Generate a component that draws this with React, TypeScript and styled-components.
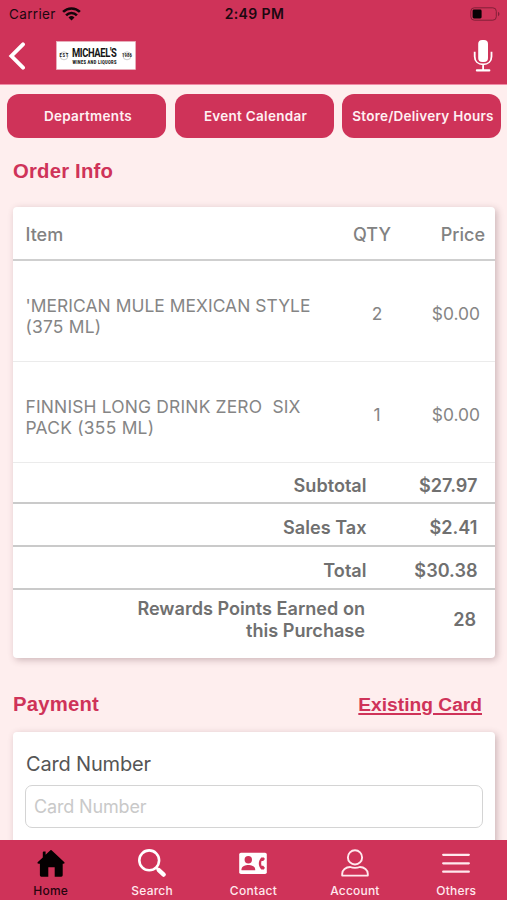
import React from "react";
import styled, { createGlobalStyle } from "styled-components";

const PINK = "#cf3359";

const GlobalStyle = createGlobalStyle`
  * { box-sizing: border-box; }
  body { margin: 0; background: #feeeee; font-family: Inter, "Liberation Sans", sans-serif; }
`;

const Screen = styled.div`
  display: flex;
  flex-direction: column;
  width: 507px;
  height: 900px;
  overflow: hidden;
  background: #feeeee;
`;

const Header = styled.header`
  flex: none;
  height: 85px;
  background: ${PINK};
  border-bottom: 1px solid #f08ba6;
`;

const StatusBar = styled.div`
  display: grid;
  grid-template-columns: 1fr auto 1fr;
  align-items: center;
  height: 27px;
  padding: 0 7px 0 9px;
  color: #1c0810;
  font-size: 13.5px;
`;

const Carrier = styled.div`
  display: flex;
  align-items: center;
  gap: 6px;
  letter-spacing: 0.35px;
`;

const Clock = styled.div`
  font-size: 14px;
  font-weight: 600;
  letter-spacing: 0.4px;
`;

const BatterySlot = styled.div`
  display: flex;
  justify-content: flex-end;
`;

const NavBar = styled.div`
  display: flex;
  align-items: center;
  height: 57px;
  padding: 0 14px 0 8px;
`;

const Logo = styled.svg`
  margin-left: 29.5px;
  margin-right: auto;
`;

const Content = styled.main`
  flex: 1;
  min-height: 0;
  overflow: hidden;
  padding: 9px 12px 0 13px;
`;

const QuickLinks = styled.nav`
  display: grid;
  grid-template-columns: repeat(3, 1fr);
  gap: 8.5px;
  margin: 0 -6px;
`;

const QuickLink = styled.button<{ $spacing: number }>`
  height: 44px;
  padding: 0 0 0 3px;
  border: 0;
  border-radius: 12px;
  background: ${PINK};
  color: #fff0f3;
  font: 600 13.5px Inter, sans-serif;
  letter-spacing: ${(p) => p.$spacing}px;
  white-space: nowrap;
`;

const SectionHead = styled.div`
  display: flex;
  justify-content: space-between;
  align-items: center;
  height: 69px;
  padding: 0 13px 2px 0;
`;

const PaymentHead = styled(SectionHead)`
  height: 74px;
  padding: 18px 13px 0 0;
`;

const Title = styled.h2`
  margin: 0;
  color: ${PINK};
  font: 700 20.3px "Liberation Sans", sans-serif;
  letter-spacing: 0.2px;
`;

const CardLink = styled.a`
  padding-top: 1px;
  color: ${PINK};
  font: 700 19.2px "Liberation Sans", sans-serif;
  text-decoration: underline;
  text-decoration-thickness: 1.5px;
  text-underline-offset: 2px;
`;

const Card = styled.section`
  border-radius: 4px;
  background: #fff;
  box-shadow: 2px 2px 7px rgba(90, 50, 60, 0.3);
`;

const HeadRow = styled.div`
  display: grid;
  grid-template-columns: 1fr 76px 75px;
  align-items: center;
  height: 54px;
  padding: 3px 10px 0 12.5px;
  border-bottom: 2px solid #cfcfcf;
  color: #828282;
  font-size: 18px;
  font-weight: 500;
`;

const ItemRow = styled.div`
  display: grid;
  grid-template-columns: 1fr 46px 80px;
  align-items: center;
  height: 101px;
  padding: 5px 15px 0 12.5px;
  border-bottom: 1px solid #ebebeb;
  color: #858585;
  font-size: 17.4px;
  line-height: 21.5px;
`;

const ItemName = styled.div`
  padding-top: 5px;
`;

const NameLine = styled.span<{ $spacing: number }>`
  display: block;
  white-space: pre;
  letter-spacing: ${(p) => p.$spacing}px;
`;

const Cell = styled.div`
  text-align: right;
`;

const QtyCell = styled.div`
  text-align: center;
`;

const SumRow = styled.div`
  display: grid;
  grid-template-columns: 1fr 111px;
  align-items: center;
  height: 43px;
  padding: 5px 17.5px 0 13px;
  border-bottom: 2px solid #cacaca;
  color: #707070;
  font-size: 18.1px;
  font-weight: 600;
`;

const SubtotalRow = styled(SumRow)`
  height: 41px;
  padding-top: 4px;
`;

const RewardRow = styled(SumRow)`
  height: 68px;
  padding: 0 19px 9px 13px;
  border-bottom: 0;
  line-height: 21.5px;
`;

const PaymentCard = styled(Card)`
  height: 130px;
  padding: 20px 12px 0;
`;

const FieldLabel = styled.label`
  display: block;
  height: 33px;
  padding-left: 1px;
  color: #555;
  font-size: 20px;
  line-height: 24px;
  letter-spacing: -0.18px;
`;

const Field = styled.input`
  display: block;
  width: 458px;
  height: 43px;
  padding: 0 8px;
  border: 1.5px solid #d4d4d4;
  border-radius: 7px;
  outline: 0;
  background: #fff;
  font: 400 18px Inter, sans-serif;
  letter-spacing: -0.15px;
  &::placeholder { color: #c9c9c9; opacity: 1; }
`;

const TabBar = styled.nav`
  flex: none;
  display: grid;
  grid-template-columns: repeat(5, 1fr);
  height: 60px;
  background: ${PINK};
`;

const Tab = styled.a<{ $active?: boolean; $spacing?: number }>`
  display: flex;
  flex-direction: column;
  align-items: center;
  padding-top: 8px;
  color: ${(p) => (p.$active ? "#26040e" : "#ffe9ee")};
  font-size: 12px;
  font-weight: 500;
  line-height: 16px;
  letter-spacing: ${(p) => p.$spacing ?? 0.2}px;
  svg { height: 30px; margin-bottom: 5px; }
`;

const WifiIcon = () => (
  <svg width="19" height="14" viewBox="0 0 19 14" fill="none" stroke="#13050a" strokeWidth="2.6">
    <path d="M1.1 4.9a12 12 0 0 1 16.8 0" />
    <path d="M4.1 8.3a7.6 7.6 0 0 1 10.8 0" />
    <path d="M6.5 10.5a4.3 4.3 0 0 1 6 0l-3 3z" fill="#13050a" stroke="none" />
  </svg>
);

const BatteryIcon = () => (
  <svg width="30" height="14" viewBox="0 0 30 14">
    <rect x="0.8" y="0.8" width="25.5" height="12.4" rx="3.5" fill="none" stroke="#822038" />
    <rect x="2.6" y="2.6" width="9" height="8.8" rx="1.4" fill="#080204" />
    <path d="M28 4.8v4.4c2-1 2-3.4 0-4.4z" fill="#822038" />
  </svg>
);

const BackIcon = () => (
  <svg width="18" height="28" viewBox="0 0 18 28" fill="none" stroke="#fff" strokeWidth="3.9" strokeLinecap="round">
    <path d="M15 2.3L3.4 14l11.6 11.7" strokeLinejoin="miter" />
  </svg>
);

const MicIcon = () => (
  <svg width="20" height="32" viewBox="0 0 20 32" fill="none" stroke="#fff">
    <rect x="5.2" y="0" width="9.8" height="22" rx="4" fill="#fff" stroke="none" />
    <path d="M1.7 11.8v4.6c0 4.8 3.4 8 8.4 8s8.4-3.2 8.4-8v-4.6M10.1 24.4v5.8" strokeWidth="1.8" />
    <path d="M3.9 30.4h12.4" strokeWidth="2.2" strokeLinecap="round" />
  </svg>
);

const StoreLogo = () => (
  <Logo width="80" height="29" viewBox="0 0 80 29">
    <rect x="0.5" y="0.5" width="79" height="28" fill="#fff" stroke="#e9b5c1" strokeWidth="0.7" />
    <g fill="none" stroke="#aaa" strokeWidth="0.6">
      <circle cx="8" cy="14.8" r="4" />
      <circle cx="71" cy="14.8" r="4" />
    </g>
    <g fill="#151515" fontFamily="Roboto, sans-serif" fontWeight="700">
      <text transform="translate(16 16.3) scale(0.76 1)" fontSize="12.4" textLength="59">MICHAEL'S</text>
      <text transform="translate(16.5 22.6) scale(0.8 1)" fontSize="5" fontWeight="900" textLength="55">WINES AND LIQUORS</text>
      <text transform="translate(3.6 16.4) scale(0.9 1)" fontSize="4.6" textLength="9.8">EST</text>
      <text transform="translate(66 16.4) scale(0.9 1)" fontSize="4.6" textLength="11">1986</text>
    </g>
  </Logo>
);

const HomeIcon = () => (
  <svg width="30" height="30" viewBox="0 0 30 30" fill="#050001">
    <path d="M14.4 2.2Q15 1.6 15.6 2.2L28.4 14.2Q29.3 15.6 27.4 15.7H26.7V27.3Q26.7 28.7 25.3 28.7H18.7V19.2H12.3V28.7H5.3Q3.9 28.7 3.9 27.3V15.7H2.7Q.7 15.6 1.6 14.2L6.8 9.4V4.4Q6.8 3.5 7.7 3.5H9.6V6.7z" />
  </svg>
);

const SearchIcon = () => (
  <svg width="30" height="30" viewBox="0 0 30 30" fill="none" stroke="#fff">
    <circle cx="12.2" cy="12.3" r="9.9" strokeWidth="2.6" />
    <path d="M19.2 19.5l2.6 2.6" strokeWidth="2.6" />
    <path d="M21.8 22.1l4.9 4.5" strokeWidth="4.3" strokeLinecap="round" />
  </svg>
);

const ContactIcon = () => (
  <svg width="30" height="30" viewBox="0 0 30 30">
    <rect x="1.2" y="4.7" width="27.6" height="21.3" rx="1.8" fill="#fff" />
    <circle cx="10.3" cy="11.8" r="3.7" fill={PINK} />
    <path d="M3.5 22.3v-1.1c0-2.7 4.3-4.1 6.8-4.1s6.9 1.4 6.9 4.1v1.1z" fill={PINK} />
    <path d="M25.9 9.4h-2.6c-1.7 1.9-2.5 3.8-2.5 6s.8 4.1 2.5 6h2.6l1-1.6-1.7-2.1h-1.7c-.5-1.5-.5-3.1 0-4.6h1.7l1.7-2.1z" fill={PINK} />
  </svg>
);

const AccountIcon = () => (
  <svg width="30" height="30" viewBox="0 0 30 30" fill="none" stroke="#ffe9ee" strokeWidth="1.9" strokeLinejoin="round">
    <circle cx="15" cy="9.4" r="7.1" />
    <path d="M2.2 27.6v-1.8c0-3.8 3.6-6.8 8-6.8 1.8.8 3 .9 4.8.9s3-.1 4.8-.9c4.4 0 8 3 8 6.8v1.8z" />
  </svg>
);

const MenuIcon = () => (
  <svg width="30" height="30" viewBox="0 0 30 30" stroke="#ffe9ee" strokeWidth="2.3" strokeLinecap="round">
    <path d="M2.2 6.8h25.6M2.2 15.3h25.6M2.2 23.7h25.6" />
  </svg>
);

type Item = { lines: [string, number][]; qty: number; price: string };

const items: Item[] = [
  { lines: [["'MERICAN MULE MEXICAN STYLE", 0.06], ["(375 ML)", 0.2]], qty: 2, price: "$0.00" },
  { lines: [["FINNISH LONG DRINK ZERO  SIX", 0.19], ["PACK (355 ML)", 0.25]], qty: 1, price: "$0.00" },
];

export default function App() {
  return (
    <Screen>
      <GlobalStyle />
      <Header>
        <StatusBar>
          <Carrier>Carrier <WifiIcon /></Carrier>
          <Clock>2:49 PM</Clock>
          <BatterySlot><BatteryIcon /></BatterySlot>
        </StatusBar>
        <NavBar>
          <BackIcon />
          <StoreLogo />
          <MicIcon />
        </NavBar>
      </Header>
      <Content>
        <QuickLinks>
          <QuickLink $spacing={0.3}>Departments</QuickLink>
          <QuickLink $spacing={0.28}>Event Calendar</QuickLink>
          <QuickLink $spacing={0.25}>Store/Delivery Hours</QuickLink>
        </QuickLinks>
        <SectionHead><Title>Order Info</Title></SectionHead>
        <Card>
          <HeadRow>
            <span>Item</span>
            <QtyCell>QTY</QtyCell>
            <Cell>Price</Cell>
          </HeadRow>
          {items.map((item) => (
            <ItemRow key={item.lines[0][0]}>
              <ItemName>
                {item.lines.map(([text, spacing]) => (
                  <NameLine key={text} $spacing={spacing}>{text}</NameLine>
                ))}
              </ItemName>
              <QtyCell>{item.qty}</QtyCell>
              <Cell>{item.price}</Cell>
            </ItemRow>
          ))}
          <SubtotalRow><Cell>Subtotal</Cell><Cell>$27.97</Cell></SubtotalRow>
          <SumRow><Cell>Sales Tax</Cell><Cell>$2.41</Cell></SumRow>
          <SumRow><Cell>Total</Cell><Cell>$30.38</Cell></SumRow>
          <RewardRow>
            <Cell>Rewards Points Earned on<br />this Purchase</Cell>
            <Cell>28</Cell>
          </RewardRow>
        </Card>
        <PaymentHead>
          <Title>Payment</Title>
          <CardLink>Existing Card</CardLink>
        </PaymentHead>
        <PaymentCard>
          <FieldLabel htmlFor="card">Card Number</FieldLabel>
          <Field id="card" placeholder="Card Number" />
        </PaymentCard>
      </Content>
      <TabBar>
        <Tab $active><HomeIcon />Home</Tab>
        <Tab><SearchIcon />Search</Tab>
        <Tab $spacing={0.3}><ContactIcon />Contact</Tab>
        <Tab><AccountIcon />Account</Tab>
        <Tab><MenuIcon />Others</Tab>
      </TabBar>
    </Screen>
  );
}
